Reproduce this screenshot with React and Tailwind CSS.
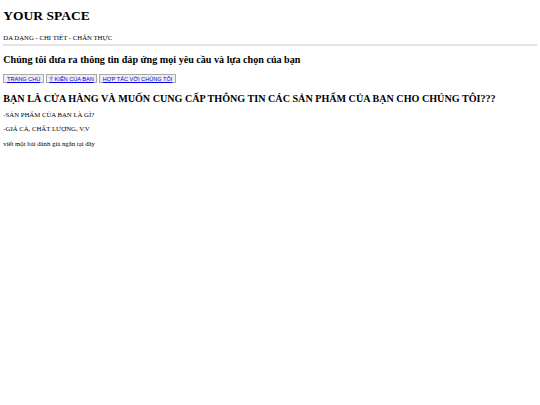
export default function App() {
  const menu = ['TRANG CHỦ', 'Ý KIẾN CỦA BẠN', 'HỢP TÁC VỚI CHÚNG TÔI'];
  const lines = ['-SẢN PHẨM CỦA BẠN LÀ GÌ?', '-GIÁ CẢ, CHẤT LƯỢNG, V.V', 'viết một bài đánh giá ngắn tại đây'];

  return (
    <div className="min-h-[405px] bg-white px-[3.3px] text-black font-['Liberation_Serif','Times_New_Roman',serif]">
      <h1 className="pt-[8.8px] text-[13.5px] leading-[14.9px] font-bold">YOUR SPACE</h1>
      <p className="mt-[10.2px] text-[6.75px] leading-[7.45px]">DA DẠNG - CHI TIẾT - CHÂN THỰC</p>
      <hr className="mt-[3px] h-[1.5px] border-0 bg-[#e4e4e4]" />

      <h2 className="mt-[7.8px] text-[10.12px] leading-[11.2px] font-bold">
        Chúng tôi đưa ra thông tin đáp ứng mọi yêu cầu và lựa chọn của bạn
      </h2>

      <div className="mt-[9.3px] flex gap-[1.7px]">
        {menu.map((m) => (
          <button
            key={m}
            className="border-[0.8px] border-[#a8a8a8] bg-[#efefef] px-[2.7px] py-[0.4px] text-[5.6px] leading-[6.4px] font-['Liberation_Sans',Arial,sans-serif]"
          >
            <a href="#" className="text-[#0000ee] underline">{m}</a>
          </button>
        ))}
      </div>

      <h2 className="mt-[9.2px] text-[10.12px] leading-[11.2px] font-bold">
        BẠN LÀ CỬA HÀNG VÀ MUỐN CUNG CẤP THÔNG TIN CÁC SẢN PHẨM CỦA BẠN CHO CHÚNG TÔI???
      </h2>

      <div className="mt-[7.3px] flex flex-col gap-[6.85px]">
        {lines.map((l) => (
          <p key={l} className="text-[6.75px] leading-[7.45px]">{l}</p>
        ))}
      </div>
    </div>
  );
}
